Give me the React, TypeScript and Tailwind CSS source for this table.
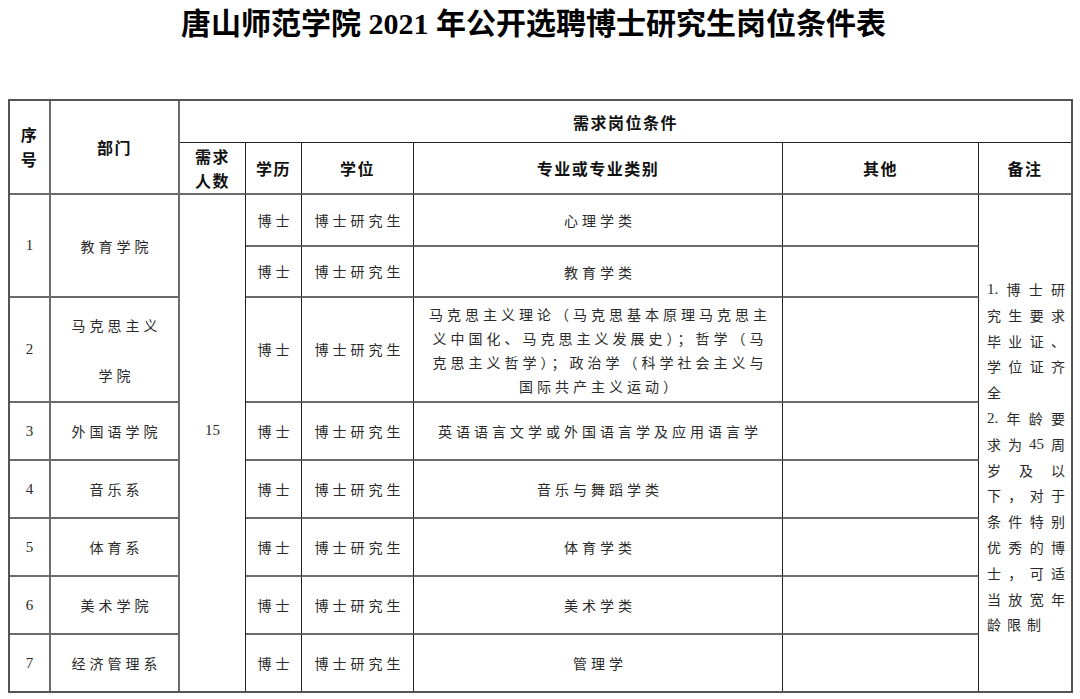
import React from "react";

const body = "font-['Noto_Sans_CJK_SC',sans-serif] text-[14px] text-[#2a2a2a]";
const head = "font-['Noto_Sans_CJK_SC',sans-serif] font-bold text-[16px] tracking-[1.5px] text-[#111]";
const serif = "font-['Liberation_Serif','Noto_Sans_CJK_SC',serif] text-[15px] text-[#2a2a2a]";

type LeftRow = { no: string; pos: string; dept: string[]; last?: boolean };
const leftRows: LeftRow[] = [
  { no: "1", pos: "row-start-3 row-span-2", dept: ["教育学院"] },
  { no: "2", pos: "row-start-5", dept: ["马克思主义", "学院"] },
  { no: "3", pos: "row-start-6", dept: ["外国语学院"] },
  { no: "4", pos: "row-start-7", dept: ["音乐系"] },
  { no: "5", pos: "row-start-8", dept: ["体育系"] },
  { no: "6", pos: "row-start-9", dept: ["美术学院"] },
  { no: "7", pos: "row-start-10", dept: ["经济管理系"], last: true },
];

type RightRow = { pos: string; major: string[]; last?: boolean };
const rightRows: RightRow[] = [
  { pos: "row-start-3", major: ["心理学类"] },
  { pos: "row-start-4", major: ["教育学类"] },
  {
    pos: "row-start-5",
    major: [
      "马克思主义理论（马克思基本原理马克思主",
      "义中国化、马克思主义发展史）；哲学（马",
      "克思主义哲学）；政治学（科学社会主义与",
      "国际共产主义运动）",
    ],
  },
  { pos: "row-start-6", major: ["英语语言文学或外国语言学及应用语言学"] },
  { pos: "row-start-7", major: ["音乐与舞蹈学类"] },
  { pos: "row-start-8", major: ["体育学类"] },
  { pos: "row-start-9", major: ["美术学类"] },
  { pos: "row-start-10", major: ["管理学"], last: true },
];

const noteLines: { parts: string[]; justify: boolean }[] = [
  { parts: ["1.", "博", "士", "研"], justify: true },
  { parts: ["究", "生", "要", "求"], justify: true },
  { parts: ["毕", "业", "证", "、"], justify: true },
  { parts: ["学", "位", "证", "齐"], justify: true },
  { parts: ["全"], justify: false },
  { parts: ["2.", "年", "龄", "要"], justify: true },
  { parts: ["求", "为", "45", "周"], justify: true },
  { parts: ["岁", "及", "以"], justify: true },
  { parts: ["下", "，", "对", "于"], justify: true },
  { parts: ["条", "件", "特", "别"], justify: true },
  { parts: ["优", "秀", "的", "博"], justify: true },
  { parts: ["士", "，", "可", "适"], justify: true },
  { parts: ["当", "放", "宽", "年"], justify: true },
  { parts: ["龄", "限", "制"], justify: false },
];

function isDigits(s: string) {
  return /^[0-9.]+$/.test(s);
}

export default function App() {
  return (
    <div className="w-[1080px] h-[699px] bg-white overflow-hidden">
      <div className="pt-[9px] pr-[13px] text-center leading-[30px] text-[30px] font-bold text-black font-['Liberation_Serif','Noto_Sans_CJK_SC',serif] whitespace-nowrap">
        唐山师范学院 2021 年公开选聘博士研究生岗位条件表
      </div>

      <div className="mt-[60px] ml-[8px] w-[1065px] border-2 border-[#555] grid grid-cols-[41px_129px_66px_56px_112px_369px_196px_92px] grid-rows-[42px_52px_52px_51px_105px_58px_58px_58px_58px_56px]">
        {/* header */}
        <div className={`col-start-1 row-start-1 row-span-2 border-r-2 border-r-[#6b6b6b] border-b-2 border-b-[#6b6b6b] flex flex-col items-center justify-center leading-[25px] ${head}`}>
          <span>序</span>
          <span>号</span>
        </div>
        <div className={`col-start-2 row-start-1 row-span-2 border-r-2 border-r-[#6b6b6b] border-b-2 border-b-[#6b6b6b] flex items-center justify-center ${head}`}>
          部门
        </div>
        <div className={`col-start-3 col-span-6 row-start-1 border-b border-b-[#222] flex items-center justify-center ${head}`}>
          需求岗位条件
        </div>
        <div className={`col-start-3 row-start-2 border-r border-r-[#222] border-b-2 border-b-[#6b6b6b] flex flex-col items-center justify-center leading-[24px] ${head}`}>
          <span>需求</span>
          <span>人数</span>
        </div>
        <div className={`col-start-4 row-start-2 border-r border-r-[#222] border-b-2 border-b-[#6b6b6b] flex items-center justify-center ${head}`}>
          学历
        </div>
        <div className={`col-start-5 row-start-2 border-r border-r-[#222] border-b-2 border-b-[#6b6b6b] flex items-center justify-center ${head}`}>
          学位
        </div>
        <div className={`col-start-6 row-start-2 border-r border-r-[#222] border-b-2 border-b-[#6b6b6b] flex items-center justify-center ${head}`}>
          专业或专业类别
        </div>
        <div className={`col-start-7 row-start-2 border-r border-r-[#222] border-b-2 border-b-[#6b6b6b] flex items-center justify-center ${head}`}>
          其他
        </div>
        <div className={`col-start-8 row-start-2 border-b-2 border-b-[#6b6b6b] flex items-center justify-center ${head}`}>
          备注
        </div>

        {/* left columns */}
        {leftRows.map((r) => (
          <React.Fragment key={r.no}>
            <div
              className={`col-start-1 ${r.pos} border-r-2 border-r-[#6b6b6b] ${r.last ? "" : "border-b-2 border-b-[#6b6b6b]"} flex items-center justify-center ${serif}`}
            >
              {r.no}
            </div>
            <div
              className={`col-start-2 ${r.pos} border-r-2 border-r-[#6b6b6b] ${r.last ? "" : "border-b-2 border-b-[#6b6b6b]"} flex flex-col items-center justify-center pl-[4px] leading-[50px] tracking-[4px] ${body}`}
            >
              {r.dept.map((d) => (
                <span key={d}>{d}</span>
              ))}
            </div>
          </React.Fragment>
        ))}

        {/* 需求人数 */}
        <div className={`col-start-3 row-start-3 row-span-8 border-r border-r-[#222] flex items-center justify-center pb-[26px] ${serif}`}>
          15
        </div>

        {/* right rows */}
        {rightRows.map((r, i) => (
          <React.Fragment key={i}>
            <div
              className={`col-start-4 ${r.pos} border-r border-r-[#222] ${r.last ? "" : "border-b-2 border-b-[#6b6b6b]"} flex items-center justify-center pl-[4px] tracking-[4px] ${body}`}
            >
              博士
            </div>
            <div
              className={`col-start-5 ${r.pos} border-r border-r-[#222] ${r.last ? "" : "border-b-2 border-b-[#6b6b6b]"} flex items-center justify-center pl-[4px] tracking-[4px] ${body}`}
            >
              博士研究生
            </div>
            <div
              className={`col-start-6 ${r.pos} border-r border-r-[#222] ${r.last ? "" : "border-b-2 border-b-[#6b6b6b]"} flex flex-col items-center justify-center pl-[4px] leading-[24px] tracking-[4px] whitespace-nowrap ${body}`}
            >
              {r.major.map((m) => (
                <span key={m}>{m}</span>
              ))}
            </div>
            <div
              className={`col-start-7 ${r.pos} border-r border-r-[#222] ${r.last ? "" : "border-b-2 border-b-[#6b6b6b]"}`}
            />
          </React.Fragment>
        ))}

        {/* 备注 */}
        <div className={`col-start-8 row-start-3 row-span-8 pt-[82px] pl-[8px] pr-[6px] ${body}`}>
          {noteLines.map((l, i) => (
            <div
              key={i}
              className={`h-[25.8px] leading-[25.8px] flex ${l.justify ? "justify-between" : "justify-start gap-[6px]"}`}
            >
              {l.parts.map((p, j) => (
                <span key={j} className={isDigits(p) ? "font-['Liberation_Serif',serif] text-[15px]" : ""}>
                  {p}
                </span>
              ))}
            </div>
          ))}
        </div>
      </div>
    </div>
  );
}
